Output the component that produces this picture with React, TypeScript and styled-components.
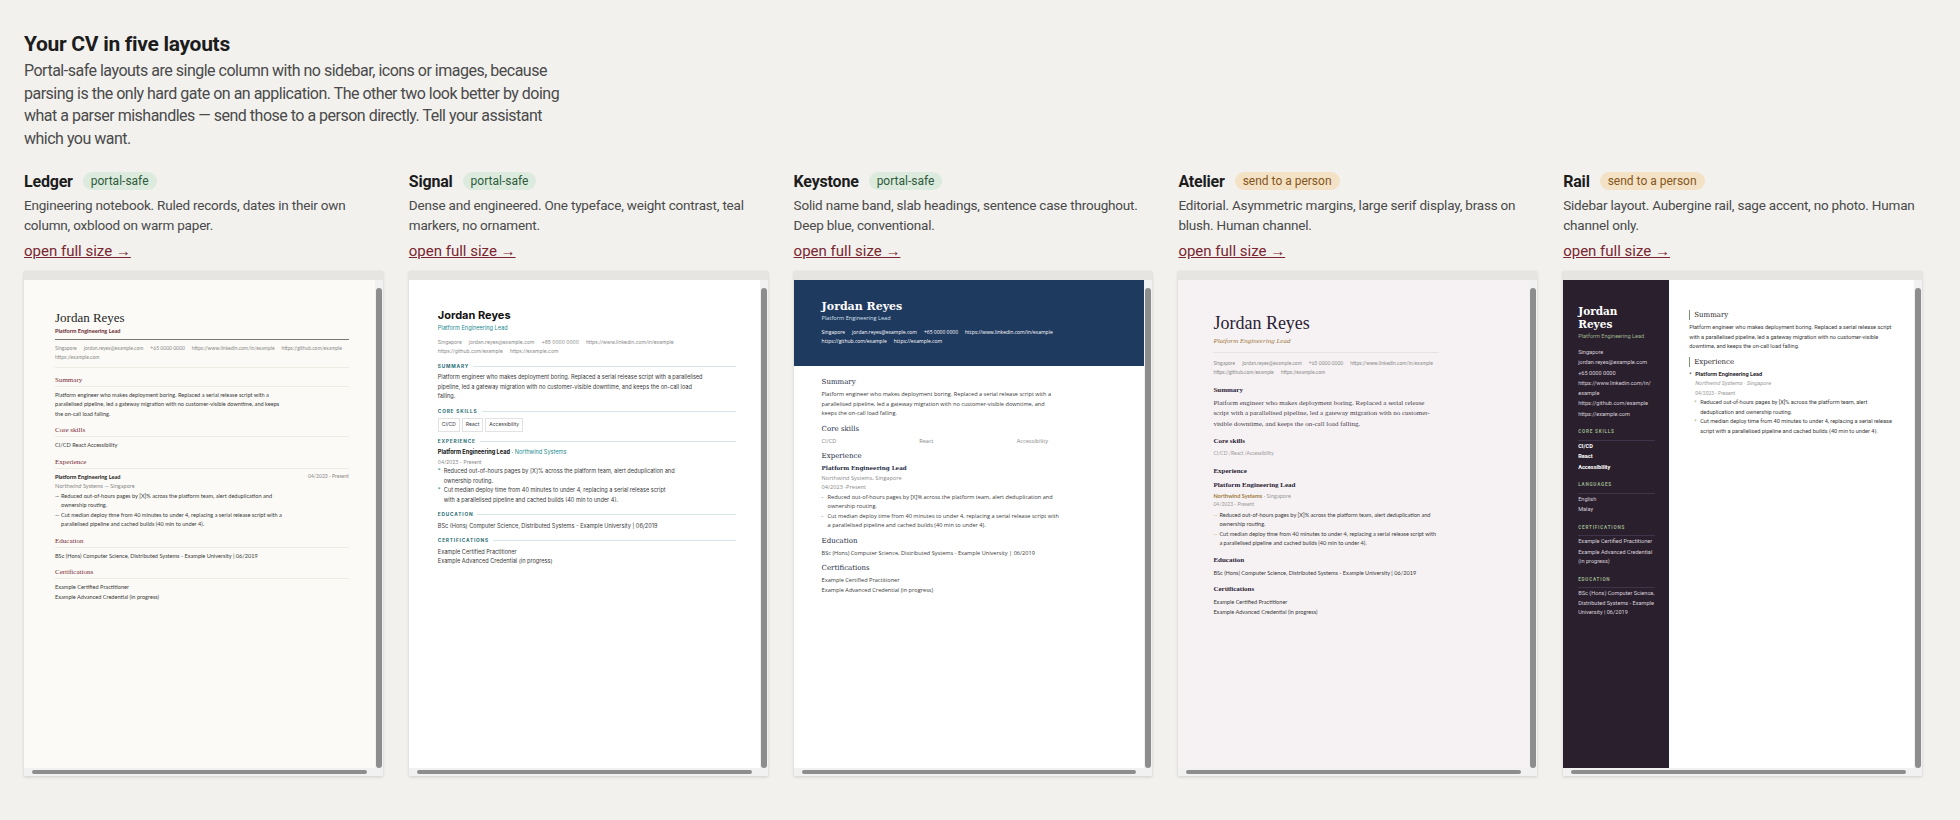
import * as React from 'react';
import styled, {createGlobalStyle, css} from 'styled-components';

const Global = createGlobalStyle`
  html, body { margin: 0; padding: 0; background: #f2f1ee; }
  body { font-family: Roboto, "Liberation Sans", sans-serif; color: #2b2b2b; }
  * { box-sizing: border-box; }
`;

const Page = styled.div`
  padding: 30px 38px 40px 24px;
  min-height: 860px;
`;

const Title = styled.h1`
  margin: 0;
  font-size: 21px;
  line-height: 28px;
  letter-spacing: -0.3px;
  font-weight: 700;
  color: #1c1c1c;
`;

const Intro = styled.p`
  margin: 2px 0 19px;
  max-width: 560px;
  font-size: 16px;
  line-height: 22.5px;
  letter-spacing: -0.5px;
  color: #4a4a4a;
`;

const Grid = styled.div`
  display: grid;
  grid-template-columns: repeat(5, 1fr);
  gap: 26px;
`;

const Col = styled.div`
  display: flex;
  flex-direction: column;
`;

const NameRow = styled.div`
  display: flex;
  align-items: center;
  gap: 10px;
  height: 24px;
`;

const LayoutName = styled.span`
  font-size: 16px;
  font-weight: 700;
  letter-spacing: -0.2px;
  color: #1c1c1c;
`;

const Badge = styled.span<{$tone: 'safe' | 'person'}>`
  font-size: 12px;
  padding: 2px 8px;
  border-radius: 10px;
  ${p => p.$tone === 'safe'
    ? css`background: #dcebdd; color: #2f5a3c;`
    : css`background: #f4e2c6; color: #84561c;`}
`;

const Desc = styled.p`
  margin: 2px 0 0;
  font-size: 13.5px;
  line-height: 20px;
  letter-spacing: -0.2px;
  color: #4a4a4a;
  min-height: 40px;
`;

const OpenLink = styled.a`
  margin-top: 6px;
  font-size: 15px;
  line-height: 20px;
  color: #7a2630;
  text-decoration: underline;
  cursor: pointer;
`;

const Frame = styled.div`
  margin-top: 10px;
  height: 505px;
  display: grid;
  grid-template-columns: 1fr 8px;
  grid-template-rows: 1fr 8px;
  background: #fff;
  box-shadow: 0 1px 3px rgba(0, 0, 0, 0.15);
  border-top: 9px solid #e6e5e2;
`;

const Viewport = styled.div`
  overflow: hidden;
`;

const VTrack = styled.div`
  background: #f1f1f1;
  padding: 8px 1px 0;
  &::after { content: ''; display: block; height: 100%; background: #8d8d8d; border-radius: 3px; }
`;

const HTrack = styled.div`
  background: #f1f1f1;
  padding: 2px 8px;
  &::after { content: ''; display: block; height: 100%; background: #8d8d8d; border-radius: 3px; }
`;

const Corner = styled.div`
  background: #f1f1f1;
`;

/* ---------- shared mini doc bits ---------- */

const Doc = styled.div<{$bg: string; $font: string}>`
  min-height: 520px;
  background: ${p => p.$bg};
  font-family: ${p => p.$font};
  font-size: 5.6px;
  line-height: 9.5px;
  color: #3a3a3a;
`;

const Contacts = styled.div<{$color?: string}>`
  display: flex;
  flex-wrap: wrap;
  column-gap: 7px;
  color: ${p => p.$color || '#8a8a8a'};
  font-size: 5px;
`;

const Para = styled.div<{$w?: number}>`
  max-width: ${p => p.$w || 230}px;
`;

const Bullet = styled.div<{$mark: string; $markColor?: string}>`
  position: relative;
  padding-left: 6px;
  max-width: 240px;
  &::before {
    content: '${p => p.$mark}';
    position: absolute;
    left: 0;
    color: ${p => p.$markColor || 'inherit'};
  }
`;

const contact = ['Singapore', 'jordan.reyes@example.com', '+65 0000 0000', 'https://www.linkedin.com/in/example', 'https://github.com/example', 'https://example.com'];
const summary = 'Platform engineer who makes deployment boring. Replaced a serial release script with a parallelised pipeline, led a gateway migration with no customer-visible downtime, and keeps the on-call load falling.';
const b1 = 'Reduced out-of-hours pages by [X]% across the platform team, alert deduplication and ownership routing.';
const b2 = 'Cut median deploy time from 40 minutes to under 4, replacing a serial release script with a parallelised pipeline and cached builds (40 min to under 4).';
const edu = 'BSc (Hons) Computer Science, Distributed Systems - Example University | 06/2019';

/* ---------- Ledger ---------- */

const LedgerBody = styled.div`
  padding: 30px 26px 20px 31px;
`;
const LName = styled.div`
  font-family: "Liberation Serif", serif;
  font-size: 13px;
  line-height: 16px;
  color: #1f1f1f;
`;
const LRole = styled.div`
  font-weight: 700;
  color: #6b2a33;
  font-size: 5.6px;
  padding-bottom: 3px;
  border-bottom: 1.5px solid #777;
  margin-bottom: 4px;
`;
const LHead = styled.div`
  font-family: "Liberation Serif", serif;
  font-size: 7px;
  line-height: 12px;
  color: #7a2a35;
  border-bottom: 1px solid #eeebe4;
  margin: 6px 0 3px;
`;
const LRow = styled.div`
  display: flex;
  justify-content: space-between;
  font-weight: 700;
  color: #222;
  span { font-weight: 400; color: #888; font-size: 5px; }
`;

const Ledger = () => (
  <Doc $bg="#fbfaf6" $font="Lato, sans-serif">
    <LedgerBody>
      <LName>Jordan Reyes</LName>
      <LRole>Platform Engineering Lead</LRole>
      <Contacts style={{paddingBottom: 4, borderBottom: '1px solid #eeebe4'}}>
        {contact.map(c => <span key={c}>{c}</span>)}
      </Contacts>
      <LHead>Summary</LHead>
      <Para>{summary}</Para>
      <LHead>Core skills</LHead>
      <div>CI/CD React Accessibility</div>
      <LHead>Experience</LHead>
      <LRow>Platform Engineering Lead<span>04/2023 - Present</span></LRow>
      <div style={{color: '#888'}}>Northwind Systems — Singapore</div>
      <Bullet $mark="—">{b1}</Bullet>
      <Bullet $mark="—">{b2}</Bullet>
      <LHead>Education</LHead>
      <div>{edu}</div>
      <LHead>Certifications</LHead>
      <div>Example Certified Practitioner</div>
      <div>Example Advanced Credential (in progress)</div>
    </LedgerBody>
  </Doc>
);

/* ---------- Signal ---------- */

const SignalBody = styled.div`
  padding: 28px 24px 20px 29px;
`;
const SName = styled.div`
  font-size: 11px;
  line-height: 14px;
  font-weight: 700;
  color: #111;
`;
const SRole = styled.div`
  color: #1d8a8f;
  margin: 2px 0 4px;
`;
const SHead = styled.div`
  display: flex;
  align-items: center;
  gap: 4px;
  font-size: 4.8px;
  font-weight: 700;
  letter-spacing: 0.8px;
  color: #2a6e74;
  margin: 5px 0 2px;
  &::after { content: ''; flex: 1; height: 1px; background: #d6e6e7; }
`;
const Chips = styled.div`
  display: flex;
  gap: 2px;
`;
const Chip = styled.span`
  border: 1px solid #e2e2e2;
  padding: 1px 3px;
  font-size: 5px;
`;

const Signal = () => (
  <Doc $bg="#fff" $font="Inter, sans-serif">
    <SignalBody>
      <SName>Jordan Reyes</SName>
      <SRole>Platform Engineering Lead</SRole>
      <Contacts>{contact.map(c => <span key={c}>{c}</span>)}</Contacts>
      <SHead>SUMMARY</SHead>
      <Para $w={270}>{summary}</Para>
      <SHead>CORE SKILLS</SHead>
      <Chips><Chip>CI/CD</Chip><Chip>React</Chip><Chip>Accessibility</Chip></Chips>
      <SHead>EXPERIENCE</SHead>
      <div><b style={{color: '#111'}}>Platform Engineering Lead</b> · <span style={{color: '#1d8a8f'}}>Northwind Systems</span></div>
      <div style={{color: '#888', fontSize: 5}}>04/2023 - Present</div>
      <Bullet $mark="*" $markColor="#1d8a8f">{b1}</Bullet>
      <Bullet $mark="*" $markColor="#1d8a8f">{b2}</Bullet>
      <SHead>EDUCATION</SHead>
      <div>{edu}</div>
      <SHead>CERTIFICATIONS</SHead>
      <div>Example Certified Practitioner</div>
      <div>Example Advanced Credential (in progress)</div>
    </SignalBody>
  </Doc>
);

/* ---------- Keystone ---------- */

const Band = styled.div`
  background: #1f3a5f;
  color: #fff;
  padding: 20px 24px 22px 28px;
  height: 86px;
`;
const KName = styled.div`
  font-family: "DejaVu Serif", serif;
  font-weight: 700;
  font-size: 11px;
  line-height: 14px;
`;
const KRole = styled.div`
  color: #d6e0ee;
  font-size: 5.6px;
  margin-bottom: 4px;
`;
const KBody = styled.div`
  padding: 6px 30px 20px 28px;
`;
const KHead = styled.div`
  font-family: "DejaVu Serif", serif;
  font-size: 7px;
  line-height: 12px;
  color: #1d2c44;
  margin: 4px 0 2px;
`;
const SkillCols = styled.div`
  display: grid;
  grid-template-columns: repeat(3, 1fr);
  color: #888;
`;

const Keystone = () => (
  <Doc $bg="#fff" $font="'Open Sans', sans-serif">
    <Band>
      <KName>Jordan Reyes</KName>
      <KRole>Platform Engineering Lead</KRole>
      <Contacts $color="#fff">{contact.map(c => <span key={c}>{c}</span>)}</Contacts>
    </Band>
    <KBody>
      <KHead>Summary</KHead>
      <Para $w={230}>{summary}</Para>
      <KHead>Core skills</KHead>
      <SkillCols><span>CI/CD</span><span>React</span><span>Accessibility</span></SkillCols>
      <KHead>Experience</KHead>
      <div style={{fontFamily: '"DejaVu Serif", serif', fontWeight: 700, color: '#1d2c44'}}>Platform Engineering Lead</div>
      <div style={{color: '#888'}}>Northwind Systems, Singapore</div>
      <div style={{color: '#888'}}>04/2023 -Present</div>
      <Bullet $mark="-">{b1}</Bullet>
      <Bullet $mark="-">{b2}</Bullet>
      <KHead>Education</KHead>
      <div>{edu}</div>
      <KHead>Certifications</KHead>
      <div>Example Certified Practitioner</div>
      <div>Example Advanced Credential (in progress)</div>
    </KBody>
  </Doc>
);

/* ---------- Atelier ---------- */

const ABody = styled.div`
  padding: 32px 90px 20px 35px;
`;
const AName = styled.div`
  font-family: "Liberation Serif", serif;
  font-size: 18px;
  line-height: 22px;
  color: #2a2233;
`;
const ARole = styled.div`
  font-family: "Liberation Serif", serif;
  font-style: italic;
  font-size: 7px;
  color: #a0793c;
  margin: 3px 0 6px;
  padding-bottom: 5px;
  border-bottom: 1px solid #e8e1e3;
`;
const AHead = styled.div`
  font-family: "Liberation Serif", serif;
  font-weight: 700;
  font-size: 7px;
  line-height: 12px;
  color: #2a2233;
  margin: 6px 0 2px;
`;
const APara = styled.div`
  font-family: "Liberation Serif", serif;
  font-size: 7px;
  line-height: 10.5px;
  color: #4a3f4d;
`;

const Atelier = () => (
  <Doc $bg="#f6f2f3" $font="Lato, sans-serif">
    <ABody>
      <AName>Jordan Reyes</AName>
      <ARole>Platform Engineering Lead</ARole>
      <Contacts>{contact.map(c => <span key={c}>{c}</span>)}</Contacts>
      <AHead>Summary</AHead>
      <APara>{summary}</APara>
      <AHead>Core skills</AHead>
      <div style={{color: '#999', fontSize: 5}}>CI/CD /React /Accessibility</div>
      <AHead>Experience</AHead>
      <AHead style={{margin: 0}}>Platform Engineering Lead</AHead>
      <div><span style={{color: '#a0793c', fontWeight: 700}}>Northwind Systems</span> <span style={{color: '#999'}}>· Singapore</span></div>
      <div style={{color: '#999', fontSize: 5}}>04/2023 - Present</div>
      <Bullet $mark="—" $markColor="#c9b48c">{b1}</Bullet>
      <Bullet $mark="—" $markColor="#c9b48c">{b2}</Bullet>
      <AHead>Education</AHead>
      <div>{edu}</div>
      <AHead>Certifications</AHead>
      <div>Example Certified Practitioner</div>
      <div>Example Advanced Credential (in progress)</div>
    </ABody>
  </Doc>
);

/* ---------- Rail ---------- */

const RailWrap = styled.div`
  display: flex;
  min-height: 520px;
`;
const Side = styled.div`
  width: 106px;
  flex: none;
  background: #2a1f2d;
  color: #d8cfd9;
  padding: 25px 14px 20px 15px;
  div { margin-bottom: 1px; }
`;
const RName = styled.div`
  font-family: "DejaVu Serif", serif;
  font-weight: 700;
  font-size: 10.5px;
  line-height: 13px;
  color: #fff;
`;
const RSideHead = styled.div`
  font-size: 4.6px;
  font-weight: 700;
  letter-spacing: 0.8px;
  color: #9ab38a;
  padding-bottom: 3px;
  border-bottom: 1px solid #40344a;
  margin: 8px 0 3px;
`;
const Main = styled.div`
  flex: 1;
  padding: 25px 20px 20px 20px;
`;
const RHead = styled.div`
  font-family: "DejaVu Serif", serif;
  font-size: 7px;
  line-height: 10px;
  color: #2a1f2d;
  border-left: 1.5px solid #7e9670;
  padding-left: 4px;
  margin: 5px 0 3px;
`;

const Rail = () => (
  <Doc $bg="#fff" $font="Roboto, sans-serif">
    <RailWrap>
      <Side>
        <RName>Jordan Reyes</RName>
        <div style={{color: '#9ab38a', marginBottom: 6}}>Platform Engineering Lead</div>
        <div>Singapore</div>
        <div>jordan.reyes@example.com</div>
        <div>+65 0000 0000</div>
        <div>https://www.linkedin.com/in/ example</div>
        <div>https://github.com/example</div>
        <div>https://example.com</div>
        <RSideHead>CORE SKILLS</RSideHead>
        <div style={{color: '#fff', fontWeight: 700}}>CI/CD</div>
        <div style={{color: '#fff', fontWeight: 700}}>React</div>
        <div style={{color: '#fff', fontWeight: 700}}>Accessibility</div>
        <RSideHead>LANGUAGES</RSideHead>
        <div>English</div>
        <div>Malay</div>
        <RSideHead>CERTIFICATIONS</RSideHead>
        <div>Example Certified Practitioner</div>
        <div>Example Advanced Credential (in progress)</div>
        <RSideHead>EDUCATION</RSideHead>
        <div>BSc (Hons) Computer Science, Distributed Systems - Example University | 06/2019</div>
      </Side>
      <Main>
        <RHead>Summary</RHead>
        <Para>{summary}</Para>
        <RHead>Experience</RHead>
        <Bullet $mark="*"><b style={{color: '#2a1f2d'}}>Platform Engineering Lead</b></Bullet>
        <div style={{paddingLeft: 6, color: '#999', fontStyle: 'italic'}}>Northwind Systems · Singapore</div>
        <div style={{paddingLeft: 6, color: '#999', fontSize: 5}}>04/2023 - Present</div>
        <div style={{paddingLeft: 5}}>
          <Bullet $mark="*" $markColor="#9ab38a">{b1}</Bullet>
          <Bullet $mark="*" $markColor="#9ab38a">{b2}</Bullet>
        </div>
      </Main>
    </RailWrap>
  </Doc>
);

const layouts = [
  {name: 'Ledger', tone: 'safe' as const, desc: 'Engineering notebook. Ruled records, dates in their own column, oxblood on warm paper.', Doc: Ledger},
  {name: 'Signal', tone: 'safe' as const, desc: 'Dense and engineered. One typeface, weight contrast, teal markers, no ornament.', Doc: Signal},
  {name: 'Keystone', tone: 'safe' as const, desc: 'Solid name band, slab headings, sentence case throughout. Deep blue, conventional.', Doc: Keystone},
  {name: 'Atelier', tone: 'person' as const, desc: 'Editorial. Asymmetric margins, large serif display, brass on blush. Human channel.', Doc: Atelier},
  {name: 'Rail', tone: 'person' as const, desc: 'Sidebar layout. Aubergine rail, sage accent, no photo. Human channel only.', Doc: Rail},
];

export default function App() {
  return (
    <Page>
      <Global />
      <Title>Your CV in five layouts</Title>
      <Intro>
        Portal-safe layouts are single column with no sidebar, icons or images, because parsing is the only hard gate on an application. The other two look better by doing what a parser mishandles — send those to a person directly. Tell your assistant which you want.
      </Intro>
      <Grid>
        {layouts.map(({name, tone, desc, Doc: D}) => (
          <Col key={name}>
            <NameRow>
              <LayoutName>{name}</LayoutName>
              <Badge $tone={tone}>{tone === 'safe' ? 'portal-safe' : 'send to a person'}</Badge>
            </NameRow>
            <Desc>{desc}</Desc>
            <OpenLink>open full size →</OpenLink>
            <Frame>
              <Viewport><D /></Viewport>
              <VTrack />
              <HTrack />
              <Corner />
            </Frame>
          </Col>
        ))}
      </Grid>
    </Page>
  );
}
